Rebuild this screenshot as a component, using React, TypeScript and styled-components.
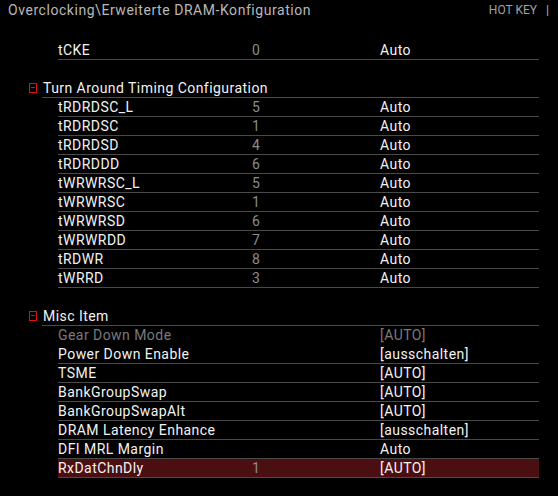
import React from 'react';
import styled, { createGlobalStyle } from 'styled-components';

type Item = { name: string; num?: string; value: string; disabled?: boolean; selected?: boolean };

const turnAround: Item[] = [
    { name: 'tRDRDSC_L', num: '5', value: 'Auto' },
    { name: 'tRDRDSC', num: '1', value: 'Auto' },
    { name: 'tRDRDSD', num: '4', value: 'Auto' },
    { name: 'tRDRDDD', num: '6', value: 'Auto' },
    { name: 'tWRWRSC_L', num: '5', value: 'Auto' },
    { name: 'tWRWRSC', num: '1', value: 'Auto' },
    { name: 'tWRWRSD', num: '6', value: 'Auto' },
    { name: 'tWRWRDD', num: '7', value: 'Auto' },
    { name: 'tRDWR', num: '8', value: 'Auto' },
    { name: 'tWRRD', num: '3', value: 'Auto' },
];

const miscItems: Item[] = [
    { name: 'Gear Down Mode', value: '[AUTO]', disabled: true },
    { name: 'Power Down Enable', value: '[ausschalten]' },
    { name: 'TSME', value: '[AUTO]' },
    { name: 'BankGroupSwap', value: '[AUTO]' },
    { name: 'BankGroupSwapAlt', value: '[AUTO]' },
    { name: 'DRAM Latency Enhance', value: '[ausschalten]' },
    { name: 'DFI MRL Margin', value: 'Auto' },
    { name: 'RxDatChnDly', num: '1', value: '[AUTO]', selected: true },
];

const SettingRow: React.FC<{ item: Item }> = ({ item }) => (
    <Row $disabled={item.disabled} $selected={item.selected}>
        <Label>{item.name}</Label>
        <Num>{item.num}</Num>
        <Value>{item.value}</Value>
    </Row>
);

const Group: React.FC<{ title: string; items: Item[] }> = ({ title, items }) => (
    <>
        <GroupHeader>
            <CollapseBox />
            <GroupTitle>{title}</GroupTitle>
        </GroupHeader>
        {items.map((item) => (
            <SettingRow key={item.name} item={item} />
        ))}
    </>
);

const App: React.FC = () => {
    return (
        <>
            <GlobalStyle />
            <Page>
                <TitleBar>
                    <Title>Overclocking\Erweiterte DRAM-Konfiguration</Title>
                    <HotKey>
                        HOT KEY
                        <Bar>|</Bar>
                    </HotKey>
                </TitleBar>
                <List>
                    <SettingRow item={{ name: 'tCKE', num: '0', value: 'Auto' }} />
                    <Spacer />
                    <Group title="Turn Around Timing Configuration" items={turnAround} />
                    <Spacer />
                    <Group title="Misc Item" items={miscItems} />
                </List>
            </Page>
        </>
    );
};

export default App;

const GlobalStyle = createGlobalStyle`
    html, body {
        margin: 0;
        padding: 0;
        background: #000;
    }
    body {
        font-family: Roboto, "Liberation Sans", sans-serif;
        font-size: 14px;
        letter-spacing: 0.45px;
        color: #fff;
    }
`;

const Page = styled.div`
    width: 558px;
    height: 496px;
    overflow: hidden;
    background: #000;
`;

const TitleBar = styled.div`
    height: 22px;
    display: flex;
    justify-content: space-between;
    align-items: flex-start;
    padding: 0 9px 0 8px;
    line-height: 20px;
`;

const Title = styled.div`
    font-size: 14px;
    letter-spacing: 0.55px;
    color: #b8b8b8;
`;

const HotKey = styled.div`
    font-size: 12px;
    color: #a0a0a0;
    display: flex;
    align-items: center;
    letter-spacing: 0;
`;

const Bar = styled.span`
    margin-left: 9px;
    font-weight: bold;
`;

const List = styled.div`
    display: flex;
    flex-direction: column;
    padding-top: 19px;
`;

const Spacer = styled.div`
    height: 19px;
`;

const Row = styled.div<{ $disabled?: boolean; $selected?: boolean }>`
    margin-left: 58px;
    width: 481px;
    height: 18px;
    line-height: 18px;
    display: grid;
    grid-template-columns: 194px 128px 1fr;
    border-bottom: 1px solid ${(p) => (p.$disabled ? 'transparent' : '#4a4a4a')};
    background: ${(p) => (p.$selected ? '#4c0f11' : 'transparent')};
    color: ${(p) => (p.$disabled ? '#7a7a7a' : '#f2f2f2')};
    font-size: 14px;
    white-space: nowrap;
`;

const Label = styled.span``;

const Num = styled.span`
    color: #8c8c8c;
`;

const Value = styled.span``;

const GroupHeader = styled.div`
    display: flex;
    align-items: center;
    margin-left: 29px;
`;

const CollapseBox = styled.span`
    position: relative;
    width: 6px;
    height: 8px;
    border: 1px solid #e01010;
    margin-right: 5px;
    margin-top: -2px;
    flex-shrink: 0;
    &::after {
        content: '';
        position: absolute;
        left: 1px;
        right: 1px;
        top: 3px;
        height: 1px;
        background: #e01010;
    }
`;

const GroupTitle = styled.div`
    flex: 1;
    height: 18px;
    line-height: 18px;
    margin-right: 19px;
    border-bottom: 1px solid #4a4a4a;
    color: #f2f2f2;
    font-size: 14px;
    padding-left: 1px;
`;
